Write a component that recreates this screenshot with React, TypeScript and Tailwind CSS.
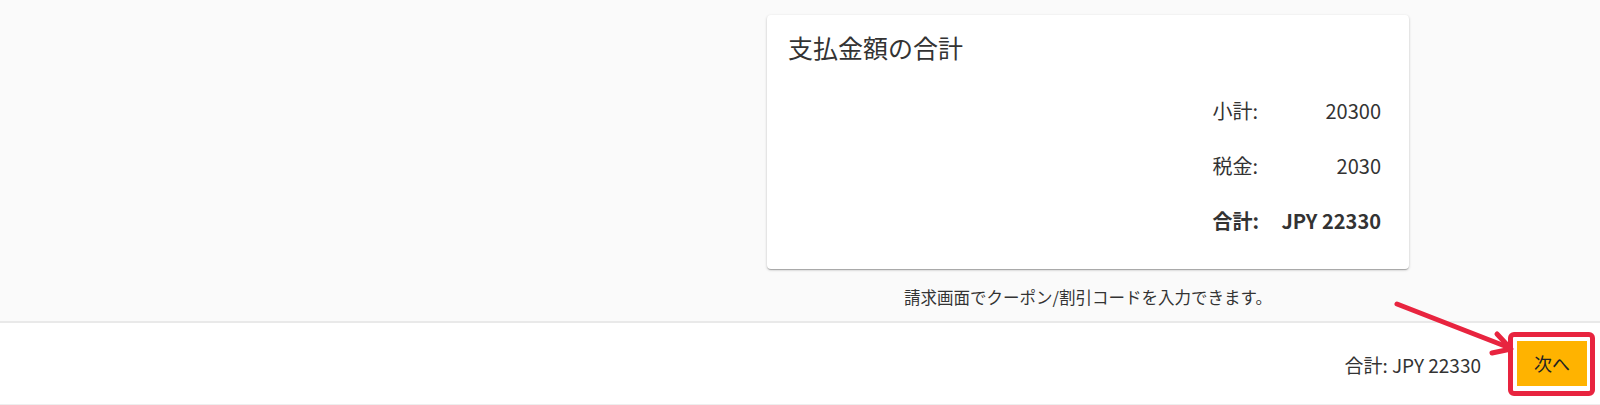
import React from "react";

const font = { fontFamily: '"Noto Sans CJK JP", "Noto Sans", sans-serif' };

function Row({ label, value, bold }: { label: string; value: string; bold?: boolean }) {
    return (
        <div className={`grid grid-cols-[auto_122px] items-center h-[55px] ${bold ? "font-bold" : ""}`}>
            <div>{label}</div>
            <div className="text-right">{value}</div>
        </div>
    );
}

export default function App() {
    return (
        <div className="w-[1600px] h-[405px] bg-[#fafafa] text-[#333] relative overflow-hidden" style={font}>
            <div className="h-[321px] pt-[15px] pl-[767px]">
                <div className="w-[642px] h-[254px] bg-white rounded-[4px] shadow-[0_1px_3px_rgba(0,0,0,0.2),0_1px_1px_rgba(0,0,0,0.14),0_2px_1px_-1px_rgba(0,0,0,0.12)] pt-4 pl-[21px] pr-[28px]">
                    <h2 className="text-[25px] leading-[32px]">支払金額の合計</h2>
                    <div className="flex justify-end mt-[20px] text-[20px]">
                        <div className="flex flex-col">
                            <Row label="小計:" value="20300" />
                            <Row label="税金:" value="2030" />
                            <Row label="合計:" value="JPY 22330" bold />
                        </div>
                    </div>
                </div>
                <p className="w-[642px] text-center text-[16.5px] leading-6 mt-[16px]">
                    請求画面でクーポン/割引コードを入力できます。
                </p>
            </div>

            <div className="h-[84px] bg-white border-t-2 border-[#e9e9e9] border-b border-b-[#eeeeee] flex items-center justify-end pr-[13px] gap-[36px]">
                <span className="text-[19px] mt-[4px]">合計: JPY 22330</span>
                <div className="relative">
                    <button className="w-[70px] h-[45px] bg-[#ffb300] text-[18px] text-[#222] flex items-center justify-center">
                        次へ
                    </button>
                    <div className="absolute -left-[9px] -right-[8px] -top-[9px] -bottom-[10px] border-[5px] border-[#e8243f] rounded-[6px]" />
                </div>
            </div>

            <svg className="absolute left-0 top-0 pointer-events-none" width="1600" height="405">
                <g stroke="#e8243f" strokeWidth="5" strokeLinecap="round" strokeLinejoin="round" fill="none">
                    <line x1="1397" y1="304" x2="1510" y2="348" />
                    <polyline points="1497,334 1511,349 1492,353" />
                </g>
            </svg>
        </div>
    );
}
